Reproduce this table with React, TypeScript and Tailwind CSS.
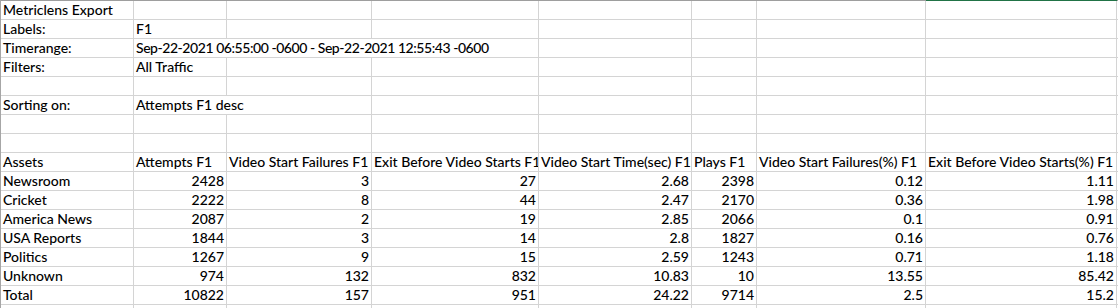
import React from "react";

type Cell = { t?: string; span?: number; r?: boolean; tight?: boolean };

const COLS = "grid grid-cols-[133px_93px_145px_167px_153px_65px_169px_191px_200px]";

const data: (string | number)[][] = [
  ["Newsroom", 2428, 3, 27, 2.68, 2398, 0.12, 1.11],
  ["Cricket", 2222, 8, 44, 2.47, 2170, 0.36, 1.98],
  ["America News", 2087, 2, 19, 2.85, 2066, 0.1, 0.91],
  ["USA Reports", 1844, 3, 14, 2.8, 1827, 0.16, 0.76],
  ["Politics", 1267, 9, 15, 2.59, 1243, 0.71, 1.18],
  ["Unknown", 974, 132, 832, 10.83, 10, 13.55, 85.42],
  ["Total", 10822, 157, 951, 24.22, 9714, 2.5, 15.2],
];

const headers = [
  "Assets",
  "Attempts F1",
  "Video Start Failures F1",
  "Exit Before Video Starts F1",
  "Video Start Time(sec) F1",
  "Plays F1",
  "Video Start Failures(%) F1",
  "Exit Before Video Starts(%) F1",
];

function Row({ cells }: { cells: Cell[] }) {
  const filled: Cell[] = [...cells];
  let used = filled.reduce((a, c) => a + (c.span ?? 1), 0);
  while (used < 9) {
    filled.push({});
    used++;
  }
  return (
    <div className={COLS}>
      {filled.map((c, i) => (
        <div
          key={i}
          className={
            "h-[19px] border-r border-b border-[#d4d4d4] px-[2px] leading-[18px] whitespace-nowrap overflow-hidden " +
            (c.span === 3 ? "col-span-3 " : c.span === 2 ? "col-span-2 " : "") +
            (c.tight ? "tracking-[-0.45px] " : "") +
            (c.r ? "text-right" : "text-left")
          }
        >
          {c.t ?? ""}
        </div>
      ))}
    </div>
  );
}

export default function App() {
  return (
    <div
      className="w-[1118px] h-[308px] overflow-hidden bg-white text-black text-[14px] font-medium"
      style={{ fontFamily: "Lato, 'Open Sans', sans-serif" }}
    >
      <div className="border-l border-[#a6a6a6]">
        <div className="flex h-px">
          <div className="w-[925px] bg-[#9e9e9e]" />
          <div className="w-[191px] bg-[#217346]" />
          <div className="flex-1 bg-[#9e9e9e]" />
        </div>
        <Row cells={[{ t: "Metriclens Export" }]} />
        <Row cells={[{ t: "Labels:" }, { t: "F1" }]} />
        <Row
          cells={[
            { t: "Timerange:" },
            { t: "Sep-22-2021 06:55:00 -0600 - Sep-22-2021 12:55:43 -0600", span: 3, tight: true },
          ]}
        />
        <Row cells={[{ t: "Filters:" }, { t: "All Traffic" }]} />
        <Row cells={[]} />
        <Row cells={[{ t: "Sorting on:" }, { t: "Attempts F1 desc", span: 2 }]} />
        <Row cells={[]} />
        <Row cells={[]} />
        <Row cells={headers.map((h) => ({ t: h }))} />
        {data.map((row, i) => (
          <Row
            key={i}
            cells={row.map((v, j) => ({ t: String(v), r: j > 0 }))}
          />
        ))}
        <Row cells={[]} />
      </div>
    </div>
  );
}
